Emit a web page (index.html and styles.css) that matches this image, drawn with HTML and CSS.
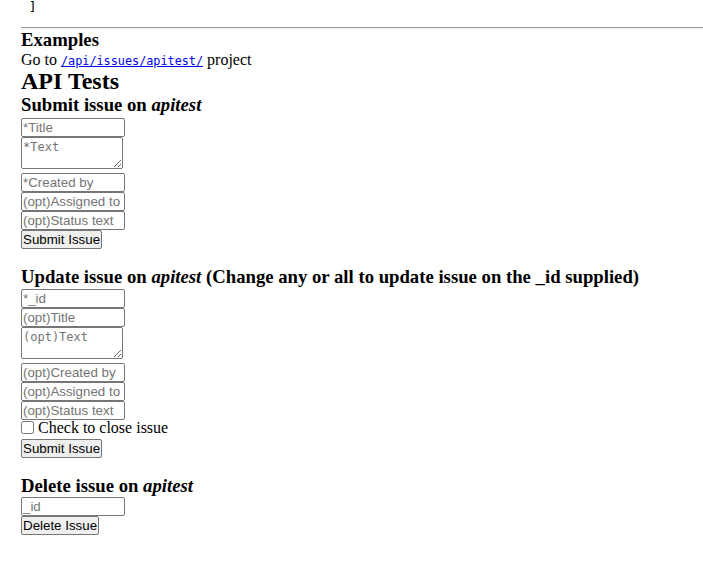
FILE: index.html
```html
<!DOCTYPE html>
<html lang="en">
<head>
<meta charset="utf-8">
<title>Issue Tracker</title>
<link rel="stylesheet" href="styles.css">
</head>
<body>
<div class="page">
  <pre class="tail"> ]</pre>
  <hr class="rule">
  <h3 class="title3">Examples</h3>
  <p class="line">Go to <a class="code-link" href="#"><code>/api/issues/apitest/</code></a> project</p>
  <h2 class="title2">API Tests</h2>

  <h3 class="title3">Submit issue on <i>apitest</i></h3>
  <form class="issue-form form-submit">
    <input class="field" type="text" placeholder="*Title">
    <textarea class="area" placeholder="*Text"></textarea>
    <input class="field" type="text" placeholder="*Created by">
    <input class="field" type="text" placeholder="(opt)Assigned to">
    <input class="field" type="text" placeholder="(opt)Status text">
    <button class="btn" type="button">Submit Issue</button>
  </form>

  <h3 class="title3">Update issue on <i>apitest</i> (Change any or all to update issue on the _id supplied)</h3>
  <form class="issue-form form-update">
    <input class="field" type="text" placeholder="*_id">
    <input class="field" type="text" placeholder="(opt)Title">
    <textarea class="area" placeholder="(opt)Text"></textarea>
    <input class="field" type="text" placeholder="(opt)Created by">
    <input class="field" type="text" placeholder="(opt)Assigned to">
    <input class="field" type="text" placeholder="(opt)Status text">
    <label class="check-row"><input class="check" type="checkbox"><span class="check-text">Check to close issue</span></label>
    <button class="btn" type="button">Submit Issue</button>
  </form>

  <h3 class="title3">Delete issue on <i>apitest</i></h3>
  <form class="issue-form form-delete">
    <input class="field" type="text" placeholder="_id">
    <button class="btn" type="button">Delete Issue</button>
  </form>
</div>
</body>
</html>
```
FILE: styles.css
```css
html, body {
  margin: 0;
  padding: 0;
  background: #ffffff;
}
body {
  font-family: "Liberation Serif", "Times New Roman", serif;
  font-size: 16px;
  color: #000000;
  overflow: hidden;
}
.page {
  padding-left: 21px;
}
.tail {
  margin: 0;
  font-family: "DejaVu Sans Mono", monospace;
  font-size: 13px;
  line-height: 13px;
  height: 12px;
}
.rule {
  margin: 15px 0 0;
  height: 0;
  border: 0;
  border-top: 1px solid #9a9a9a;
  border-bottom: 1px solid #eeeeee;
}
.title3 {
  margin: 0;
  font-size: 18.72px;
  line-height: 22px;
  font-weight: bold;
}
.title2 {
  margin: 0;
  font-size: 24px;
  line-height: 25px;
  font-weight: bold;
}
.line {
  margin: 0;
  height: 18px;
  line-height: 18px;
}
.code-link {
  color: #0000ee;
}
.code-link code {
  font-family: "DejaVu Sans Mono", monospace;
  font-size: 11.8px;
  line-height: 1;
}
.issue-form {
  margin: 1px 0 17px;
}
.form-submit {
  margin-top: 2px;
}
.form-delete {
  margin-top: 0;
}
.field {
  display: block;
  box-sizing: border-box;
  width: 104px;
  height: 19px;
  margin: 0;
  padding: 0 1px;
  border: 1px solid #767676;
  border-radius: 2px;
  font-family: "Liberation Sans", Arial, sans-serif;
  font-size: 13.33px;
  line-height: 17px;
  background: #ffffff;
}
.field::placeholder,
.area::placeholder {
  color: #757575;
  opacity: 1;
}
.area {
  display: block;
  box-sizing: border-box;
  width: 102px;
  height: 32px;
  margin: 0 0 4px;
  padding: 2px 1px;
  border: 1px solid #767676;
  border-radius: 2px;
  font-family: "DejaVu Sans Mono", monospace;
  font-size: 12px;
  line-height: 14px;
}
.btn {
  display: block;
  box-sizing: border-box;
  height: 19px;
  margin: 0;
  padding: 0 1px;
  border: 1px solid #767676;
  border-radius: 2px;
  background: #efefef;
  color: #000000;
  font-family: "Liberation Sans", Arial, sans-serif;
  font-size: 13.33px;
  line-height: 17px;
}
.check-row {
  display: flex;
  align-items: flex-start;
  height: 19px;
}
.check {
  width: 13px;
  height: 13px;
  margin: 1px 4px 0 0;
}
.check-text {
  line-height: 16px;
}
```
